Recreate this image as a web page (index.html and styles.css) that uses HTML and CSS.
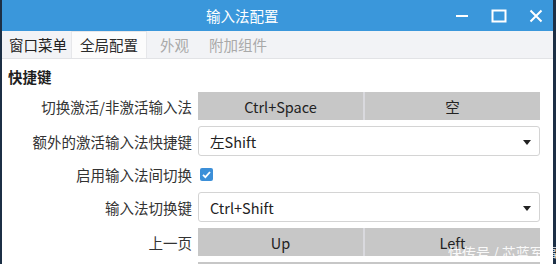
FILE: index.html
```html
<!DOCTYPE html>
<html lang="zh-CN">
<head>
  <meta charset="UTF-8" />
  <title>输入法配置</title>
  <link rel="stylesheet" href="styles.css">
</head>
<body>
  <div class="window">
    <div class="titlebar">
      <span class="title">输入法配置</span>
      <div class="controls">
        <svg class="ctl" width="14" height="14" viewBox="0 0 14 14"><path d="M1 7h12" stroke="#fff" stroke-width="2"/></svg>
        <svg class="ctl" width="16" height="14" viewBox="0 0 16 14"><rect x="1.5" y="1.5" width="13" height="11" fill="none" stroke="#fff" stroke-width="2"/></svg>
        <svg class="ctl" width="14" height="14" viewBox="0 0 14 14"><path d="M1.5 1.5l11 11M12.5 1.5l-11 11" stroke="#fff" stroke-width="2"/></svg>
      </div>
    </div>

    <div class="tabbar">
      <span class="menu">窗口菜单</span>
      <span class="tab active">全局配置</span>
      <span class="tab">外观</span>
      <span class="tab">附加组件</span>
    </div>

    <div class="content">
      <div class="section">快捷键</div>
      <div class="form">
        <label class="lbl">切换激活/非激活输入法</label>
        <div class="keys"><span class="key">Ctrl+Space</span><span class="key">空</span></div>

        <label class="lbl">额外的激活输入法快捷键</label>
        <div class="combo">左Shift<span class="arrow"></span></div>

        <label class="lbl">启用输入法间切换</label>
        <div class="check-row">
          <span class="check"><svg width="13" height="13" viewBox="0 0 13 13"><path d="M3 6.8l2.4 2.4L10 4" fill="none" stroke="#fff" stroke-width="1.8"/></svg></span>
        </div>

        <label class="lbl">输入法切换键</label>
        <div class="combo">Ctrl+Shift<span class="arrow"></span></div>

        <label class="lbl">上一页</label>
        <div class="keys"><span class="key">Up</span><span class="key">Left</span></div>

        <span></span>
        <div class="keys"></div>
      </div>
    </div>
  </div>
  <div class="watermark">快传号 / 芯蓝军事</div>
</body>
</html>
```

FILE: styles.css
```css
body {
  margin: 0;
  background: #1c2f45;
  font-family: "Noto Sans CJK SC", "Noto Sans", sans-serif;
  font-size: 14.5px;
  color: #2b2b2b;
  height: 264px;
  overflow: hidden;
  position: relative;
}

.window {
  margin-left: 2px;
  width: 551px;
  height: 264px;
  background: #fff;
  overflow: hidden;
}

.titlebar {
  height: 31px;
  background: #3a97db;
  display: flex;
  align-items: center;
  padding-left: 204px;
  position: relative;
}

.title {
  color: #fff;
}

.controls {
  position: absolute;
  right: 10px;
  top: 9px;
  display: flex;
  gap: 22px;
  align-items: center;
}

.ctl {
  display: block;
}

.tabbar {
  height: 27px;
  background: #f2f3f6;
  border-bottom: 1px solid #e2e3e6;
  display: flex;
  align-items: flex-end;
  padding-left: 7px;
}

.menu {
  height: 26px;
  line-height: 26px;
  color: #222;
  margin-right: 4px;
}

.tab {
  height: 26px;
  line-height: 26px;
  padding: 0 8px;
  color: #a9a9a9;
  margin-right: 4px;
}

.tab.active {
  background: #fcfcfc;
  color: #2b2b2b;
  border: 1px solid #e6e7ea;
  border-bottom: none;
  margin-right: 5px;
}

.content {
  padding: 7px 13px 0 6px;
}

.section {
  font-weight: bold;
  line-height: 22px;
  margin-bottom: 4px;
  color: #1f1f1f;
}

.form {
  display: grid;
  grid-template-columns: 184px 342px;
  column-gap: 6px;
  row-gap: 6px;
}

.lbl {
  text-align: right;
  display: flex;
  align-items: center;
  justify-content: flex-end;
  color: #333;
}

.keys {
  display: flex;
  height: 28px;
  background: #c7c7c7;
}

.key {
  flex: 1;
  display: flex;
  align-items: center;
  justify-content: center;
  color: #222;
}

.key + .key {
  border-left: 2px solid #d9d9de;
}

.keys .key:first-child {
  flex: 0 0 165px;
}

.combo {
  height: 30px;
  box-sizing: border-box;
  border: 1px solid #d4d4d4;
  border-radius: 3px;
  display: flex;
  align-items: center;
  padding-left: 11px;
  color: #222;
  position: relative;
}

.arrow {
  position: absolute;
  right: 8px;
  top: 13px;
  width: 0;
  height: 0;
  border-left: 4px solid transparent;
  border-right: 4px solid transparent;
  border-top: 5px solid #222;
}

.check-row {
  height: 24px;
  display: flex;
  align-items: center;
  padding-left: 2px;
}

.check {
  width: 13px;
  height: 13px;
  background: #3c8fd8;
  border-radius: 2px;
  display: block;
}

.check svg {
  display: block;
}

.watermark {
  position: absolute;
  left: 448px;
  top: 242px;
  color: #fff;
  opacity: 0.9;
  font-size: 14px;
  white-space: nowrap;
}
```
